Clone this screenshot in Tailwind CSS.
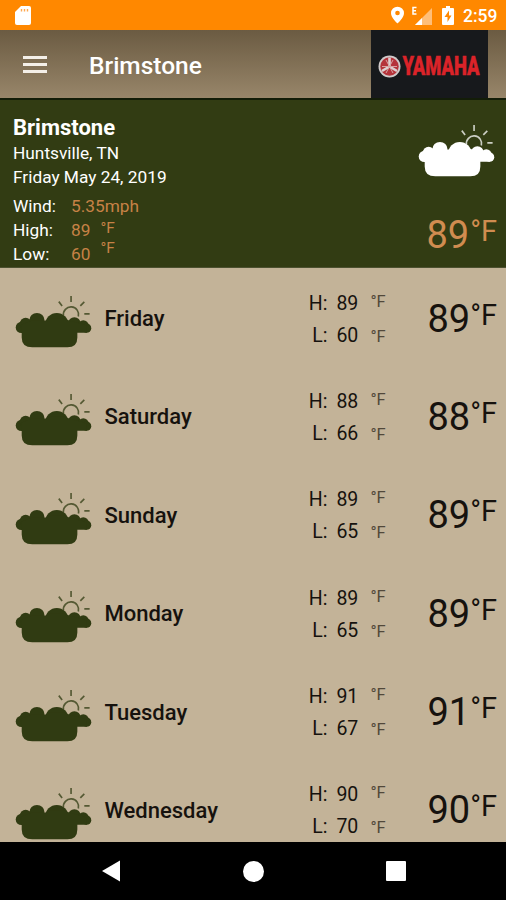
<!DOCTYPE html>
<html lang="en">
<head>
  <meta charset="UTF-8" />
  <meta name="viewport" content="width=device-width, initial-scale=1.0"/>
  <title>Brimstone Weather</title>
  <script src="https://cdn.jsdelivr.net/npm/@tailwindcss/browser@4"></script>
</head>
<body class="w-[506px] h-[900px] overflow-hidden flex flex-col bg-[#c3b398] font-['Roboto',sans-serif]">

  <!-- Shared icon -->
  <svg class="hidden">
    <symbol id="cloud" viewBox="0 0 232 160">
      <g fill="none" stroke="currentColor" opacity="0.75">
        <path d="M146 62A23 23 0 1 1 191 65" stroke-width="5" />
        <path d="M169 3V21M132 20L142 33M209 21L197 33M209 57H225" stroke-width="5" />
      </g>
      <g fill="currentColor">
        <circle cx="19" cy="98" r="17" />
        <circle cx="32" cy="87" r="18" />
        <circle cx="66" cy="77" r="23" />
        <circle cx="126" cy="89" r="35" />
        <circle cx="179" cy="86" r="19" />
        <circle cx="206" cy="92" r="16" />
        <circle cx="216" cy="100" r="14" />
        <path d="M18 90L48 78H90L105 72H150L165 78L206 88L217 95V114H188V128Q188 158 158 158H52Q20 158 20 128V115H18Z" />
      </g>
    </symbol>
  </svg>

  <!-- Status bar -->
  <div class="h-[30px] shrink-0 bg-[#ff8800] text-white flex items-center pl-[15px] pr-[9px]">
    <svg class="w-4 h-[19px]" viewBox="0 0 16 19">
      <path d="M6 0H14Q16 0 16 2V17Q16 19 14 19H2Q0 19 0 17V6Z" fill="#fff" />
      <path d="M6.5 3V5.5M9.5 3V5.5M12.5 3V5.5" stroke="#ffa850" stroke-width="1.4" />
    </svg>
    <svg class="ml-auto w-[13px] h-[18px]" viewBox="0 0 14 18">
      <path d="M7 0A7 7 0 0 0 0 7C0 12 7 18 7 18S14 12 14 7A7 7 0 0 0 7 0ZM7 4.4A2.5 2.5 0 1 1 7 9.4A2.5 2.5 0 1 1 7 4.4Z" fill="#fff" />
    </svg>
    <svg class="ml-[7px] w-[22px] h-[19px]" viewBox="0 0 22 19">
      <path d="M21 2V19H4Z" fill="#ffbe78" />
      <path d="M11 12V19H4Z" fill="#fff" />
      <path d="M5.5 1.5H2V8H5.5M2 4.7H5" fill="none" stroke="#fff" stroke-width="1.5" />
    </svg>
    <svg class="ml-[9px] w-3 h-[19px]" viewBox="0 0 12 19">
      <path d="M4 0H8V2H11Q12 2 12 3V18Q12 19 11 19H1Q0 19 0 18V3Q0 2 1 2H4Z" fill="#fff" />
      <path d="M7 4.5L2.5 11H5.5V16L9.5 9.5H7Z" fill="#ff8800" />
    </svg>
    <span class="ml-[9px] mt-0.5 w-[34px] text-[17.5px] leading-5 font-medium">2:59</span>
  </div>

  <!-- App bar -->
  <header class="h-[70px] shrink-0 flex items-center pl-[23px] bg-linear-to-b from-[#6b5b42] to-[#98866a] border-b-2 border-[#131d08]">
    <div class="w-6 flex flex-col gap-1">
      <div class="h-[3px] bg-[#f4efe8]"></div>
      <div class="h-[3px] bg-[#f4efe8]"></div>
      <div class="h-[3px] bg-[#f4efe8]"></div>
    </div>
    <h1 class="ml-[42px] mt-1 text-[24.5px] leading-8 font-medium text-white">Brimstone</h1>
    <div class="ml-auto mr-[18px] w-[117px] h-[68px] bg-[#17191c] flex items-center pl-[7px] pt-1">
      <svg class="w-[23px] h-[23px] shrink-0" viewBox="0 0 23 23">
        <circle cx="11.5" cy="11.5" r="11" fill="#d0caca" />
        <circle cx="11.5" cy="11.5" r="9.2" fill="#b5333a" />
        <path d="M11.5 2.5V11.5M4 16L11.5 11.5L19 16" stroke="#ddd0d0" stroke-width="2.6" fill="none" />
        <path d="M8 5L15 18M15 5L8 18M4 11.5H19" stroke="#d7a3a3" stroke-width="1" />
      </svg>
      <svg class="w-[80px] h-[32px] overflow-visible" viewBox="0 0 80 32">
        <text x="1.5" y="25" textLength="77" lengthAdjust="spacingAndGlyphs" class="font-['Roboto',sans-serif] font-black text-[25px]" fill="#db2329" stroke="#db2329" stroke-width="0.5">YAMAHA</text>
      </svg>
    </div>
  </header>

  <!-- Current conditions -->
  <section class="h-[168px] shrink-0 bg-[#323c13] border-b border-[#4c5130] text-white flex justify-between pl-[13px] pr-[9px]">
    <div class="pt-[15px] text-[17.3px] leading-6">
      <h2 class="text-[22px] font-bold leading-[26px]">Brimstone</h2>
      <p>Huntsville, TN</p>
      <p>Friday May 24, 2019</p>
      <div class="mt-[5px] grid grid-cols-[58px_auto] text-[#c68246]">
        <span class="text-white">Wind:</span><span>5.35mph</span>
        <span class="text-white">High:</span><span class="flex">89<span class="ml-2.5 -mt-0.5 text-[15.5px]">°F</span></span>
        <span class="text-white">Low:</span><span class="flex">60<span class="ml-2.5 -mt-1.5 text-[15.5px]">°F</span></span>
      </div>
    </div>
    <div class="flex flex-col items-end pt-6">
      <svg class="w-[77px] h-[53px] mr-0.5"><use href="#cloud" /></svg>
      <div class="mt-9 flex text-[#d08c50]">
        <span class="text-[38px] leading-[44px] -ml-px mr-px">89</span>
        <span class="text-[29px] leading-[36px]">°F</span>
      </div>
    </div>
  </section>

  <!-- Forecast -->
  <main id="forecast" class="h-[574px] shrink-0 overflow-hidden text-[#16120e]"></main>

  <!-- Navigation bar -->
  <nav class="h-[58px] shrink-0 bg-black flex items-center justify-between pl-[102px] pr-[100px]">
    <svg class="w-[18px] h-[22px]" viewBox="0 0 18 22"><path d="M0 11L18 0.5V21.5Z" fill="#fff" /></svg>
    <div class="size-[21px] rounded-full bg-white"></div>
    <div class="size-5 rounded-[1px] bg-white"></div>
  </nav>

  <script>
    const days = [
      ['Friday', 89, 60],
      ['Saturday', 88, 66],
      ['Sunday', 89, 65],
      ['Monday', 89, 65],
      ['Tuesday', 91, 67],
      ['Wednesday', 90, 70]
    ];

    document.getElementById('forecast').innerHTML = days.map(([day, high, low]) => `
      <div class="h-[98.4px] flex items-start pl-[15px] pr-[9px]">
        <svg class="mt-[27px] w-[77px] h-[53px] text-[#303b12]"><use href="#cloud" /></svg>
        <span class="ml-[12.5px] mt-[37px] flex-1 text-[22px] leading-7 font-medium">${day}</span>
        <div class="mt-[23.5px] mr-[41px] grid grid-cols-[19px_33px_16px] gap-x-[5px] gap-y-2 text-[19.5px] leading-6">
          <span class="text-right">H:</span><span class="pl-1">${high}</span><span class="-mt-[2px] text-[16.5px] text-[#51483a]">°F</span>
          <span class="text-right">L:</span><span class="pl-1">${low}</span><span class="mt-px text-[16.5px] text-[#51483a]">°F</span>
        </div>
        <div class="mt-[28.5px] flex">
          <span class="text-[38px] leading-[44px]">${high}</span>
          <span class="text-[29px] leading-[36px]">°F</span>
        </div>
      </div>
    `).join('');
  </script>
</body>
</html>
